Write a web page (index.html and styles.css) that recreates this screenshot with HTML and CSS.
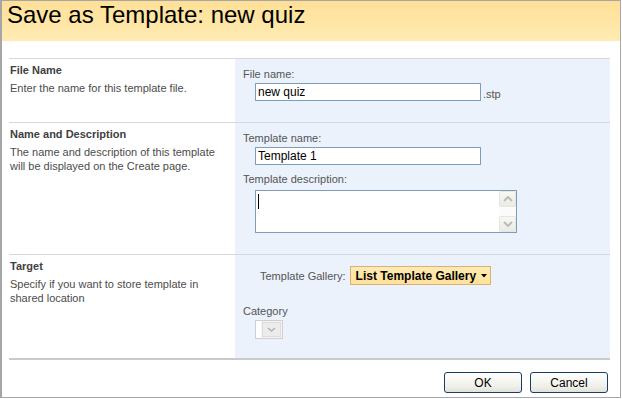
FILE: index.html
```html
<!DOCTYPE html>
<html>
<head>
    <title>Save as Template</title>
    <link rel="stylesheet" href="styles.css">
</head>
<body>
    <div class="dialog">
        <div class="title">Save as Template: new quiz</div>

        <div class="form">
            <div class="section">
                <div class="info">
                    <h3>File Name</h3>
                    <p>Enter the name for this template file.</p>
                </div>
                <div class="fields">
                    <label class="field-label">File name:</label>
                    <div class="field-row">
                        <input type="text" class="text-input" value="new quiz">
                        <span class="ext">.stp</span>
                    </div>
                </div>
            </div>

            <div class="section">
                <div class="info">
                    <h3>Name and Description</h3>
                    <p>The name and description of this template will be displayed on the Create page.</p>
                </div>
                <div class="fields">
                    <label class="field-label">Template name:</label>
                    <div class="field-row">
                        <input type="text" class="text-input" value="Template 1">
                    </div>
                    <label class="field-label spaced">Template description:</label>
                    <div class="textarea">
                        <div class="textarea-body"><span class="caret"></span></div>
                        <div class="scrollbar">
                            <span class="scroll-btn">
                                <svg width="10" height="6" viewBox="0 0 10 6"><path d="M1 5 L5 1 L9 5" fill="none" stroke="#bdbdb5" stroke-width="2"/></svg>
                            </span>
                            <span class="scroll-btn">
                                <svg width="10" height="6" viewBox="0 0 10 6"><path d="M1 1 L5 5 L9 1" fill="none" stroke="#bdbdb5" stroke-width="2"/></svg>
                            </span>
                        </div>
                    </div>
                </div>
            </div>

            <div class="section last">
                <div class="info">
                    <h3>Target</h3>
                    <p>Specify if you want to store template in shared location</p>
                </div>
                <div class="fields target">
                    <div class="gallery-row">
                        <span class="gallery-label">Template Gallery:</span>
                        <span class="gallery-btn">List Template Gallery
                            <svg width="6" height="4" viewBox="0 0 6 4"><path d="M0 0 H6 L3 3.5 Z" fill="#000"/></svg>
                        </span>
                    </div>
                    <label class="field-label category">Category</label>
                    <div class="select">
                        <span class="select-text"></span>
                        <span class="select-btn">
                            <svg width="9" height="5" viewBox="0 0 9 5"><path d="M1 1 L4.5 4 L8 1" fill="none" stroke="#b4b4b4" stroke-width="1.6"/></svg>
                        </span>
                    </div>
                </div>
            </div>
        </div>

        <div class="actions">
            <button>OK</button>
            <button>Cancel</button>
        </div>
    </div>
</body>
</html>
```

FILE: styles.css
```css
body {
    margin: 0;
    font-family: 'Liberation Sans', Arial, sans-serif;
    font-size: 11px;
    color: #4c4c4c;
    background-color: white;
}

.dialog {
    width: 621px;
    height: 398px;
    box-sizing: border-box;
    border: 1px solid #a6a6a6;
    border-left-width: 2px;
    display: flex;
    flex-direction: column;
}

.title {
    height: 40px;
    box-sizing: border-box;
    padding: 1px 0 0 5px;
    font-size: 24px;
    line-height: 26px;
    color: #000;
    background: linear-gradient(to bottom, #ffe097, #ffebb3);
}

.form {
    margin: 17px 10px 0 7px;
}

.section {
    display: grid;
    grid-template-columns: 226px 1fr;
    border-top: 1px solid #d8d8d8;
}

.section.last {
    border-bottom: 2px solid #cacaca;
}

.info {
    padding: 4px 15px 0 1px;
}

.info h3 {
    margin: 0;
    font-size: 11px;
    line-height: 14px;
    font-weight: bold;
    color: #3f3f3f;
}

.info p {
    margin: 4px 0 0 0;
    line-height: 14px;
}

.fields {
    background-color: #ebf2fc;
    padding: 8px 8px 21px 8px;
}

.field-label {
    display: block;
    line-height: 14px;
    color: #555;
}

.field-label.spaced {
    margin-top: 7px;
}

.field-row {
    display: flex;
    align-items: flex-end;
    margin: 2px 0 0 12px;
}

.text-input {
    width: 226px;
    height: 18px;
    box-sizing: border-box;
    border: 1px solid #7f9db9;
    padding: 0 2px;
    margin: 0;
    font-family: 'Liberation Sans', Arial, sans-serif;
    font-size: 12px;
    color: #000;
    background: white;
}

.ext {
    margin-left: 2px;
    line-height: 14px;
    color: #555;
}

.textarea {
    display: flex;
    width: 262px;
    height: 43px;
    box-sizing: border-box;
    margin: 4px 0 0 12px;
    border: 1px solid #7f9db9;
    background: white;
}

.textarea-body {
    flex: 1;
    padding: 3px 0 0 2px;
}

.caret {
    display: block;
    width: 1px;
    height: 15px;
    background: #000;
}

.scrollbar {
    width: 17px;
    display: flex;
    flex-direction: column;
    justify-content: space-between;
    background: #fbfbf9;
}

.scroll-btn {
    height: 16px;
    display: flex;
    align-items: center;
    justify-content: center;
    box-sizing: border-box;
    border: 1px solid #e6e6e0;
    border-radius: 2px;
    background: linear-gradient(to bottom, #f7f7f4, #ebebe6);
}

.fields.target {
    padding: 11px 8px 19px 8px;
}

.gallery-row {
    display: flex;
    align-items: center;
    padding-left: 17px;
}

.gallery-label {
    color: #555;
    line-height: 14px;
}

.gallery-btn {
    display: flex;
    align-items: center;
    gap: 5px;
    height: 19px;
    box-sizing: border-box;
    margin-left: 4px;
    padding: 0 3px 0 5px;
    border: 1px solid #d4b27a;
    background: linear-gradient(to bottom, #ffeab1, #ffe19a);
    font-size: 12px;
    font-weight: bold;
    color: #000;
}

.field-label.category {
    margin-top: 19px;
}

.select {
    display: flex;
    width: 28px;
    height: 19px;
    box-sizing: border-box;
    margin: 2px 0 0 12px;
    border: 1px solid #cfcfcf;
    background: #f4f4f4;
}

.select-text {
    width: 5px;
    background: white;
}

.select-btn {
    flex: 1;
    display: flex;
    align-items: center;
    justify-content: center;
    margin: 1px;
    border: 1px solid #dcdcdc;
    background: #ececec;
}

.actions {
    display: flex;
    justify-content: flex-end;
    gap: 8px;
    padding: 12px 12px 0 0;
}

button {
    width: 78px;
    height: 21px;
    padding: 0;
    border: 1px solid #1d3c63;
    border-radius: 3px;
    background: linear-gradient(to bottom, #ffffff, #f0f0ea 70%, #e2e2da);
    font-family: 'Liberation Sans', Arial, sans-serif;
    font-size: 12px;
    color: #000;
}
```
